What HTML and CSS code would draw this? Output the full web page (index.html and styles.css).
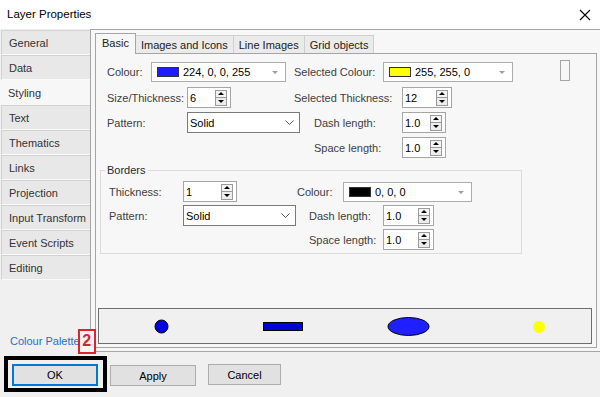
FILE: index.html
```html
<!DOCTYPE html>
<html lang="en">
<head>
    <meta charset="UTF-8">
    <meta name="viewport" content="width=device-width, initial-scale=1.0">
    <title>Layer Properties</title>
    <link rel="stylesheet" href="styles.css">
</head>
<body>
    <div class="titlebar">
        <span class="title">Layer Properties</span>
        <svg class="close" width="12" height="12" viewBox="0 0 12 12"><path d="M1 1L11 11M11 1L1 11" stroke="#000" stroke-width="1.1" fill="none"/></svg>
    </div>

    <div class="main">
        <div class="sidebar">
            <div class="nav-item">General</div>
            <div class="nav-item">Data</div>
            <div class="nav-item active">Styling</div>
            <div class="nav-item">Text</div>
            <div class="nav-item">Thematics</div>
            <div class="nav-item">Links</div>
            <div class="nav-item">Projection</div>
            <div class="nav-item">Input Transform</div>
            <div class="nav-item">Event Scripts</div>
            <div class="nav-item">Editing</div>
            <div class="palette-row">
                <a class="palette-link">Colour Palette</a><span class="badge">2</span>
            </div>
        </div>

        <div class="panel">
            <div class="tabs">
                <div class="tab active">Basic</div>
                <div class="tab">Images and Icons</div>
                <div class="tab">Line Images</div>
                <div class="tab">Grid objects</div>
            </div>
            <div class="page">
                <div class="form">
                    <div class="row first">
                        <span class="label w-colour">Colour:</span>
                        <div class="combo w-combo1"><span class="swatch blue"></span><span class="combo-text">224, 0, 0, 255</span><span class="drop"></span></div>
                        <span class="label w-selcol">Selected Colour:</span>
                        <div class="combo w-combo2"><span class="swatch yellow"></span><span class="combo-text">255, 255, 0</span><span class="drop"></span></div>
                        <span class="blank-box"></span>
                    </div>
                    <div class="row">
                        <span class="label w-left">Size/Thickness:</span>
                        <div class="spin w44"><span class="spin-text">6</span><span class="spin-btn"><i class="up"></i><i class="down"></i></span></div>
                        <span class="label w-selthick">Selected Thickness:</span>
                        <div class="spin w50"><span class="spin-text">12</span><span class="spin-btn"><i class="up"></i><i class="down"></i></span></div>
                    </div>
                    <div class="row">
                        <span class="label w-left">Pattern:</span>
                        <div class="select w113"><span>Solid</span><svg width="9" height="5" viewBox="0 0 9 5"><polyline points="0.5,0.5 4.5,4.5 8.5,0.5" fill="none" stroke="#555" stroke-width="1"/></svg></div>
                        <span class="label w-dash">Dash length:</span>
                        <div class="spin w44"><span class="spin-text">1.0</span><span class="spin-btn"><i class="up"></i><i class="down"></i></span></div>
                    </div>
                    <div class="row">
                        <span class="label w-space">Space length:</span>
                        <div class="spin w44"><span class="spin-text">1.0</span><span class="spin-btn"><i class="up"></i><i class="down"></i></span></div>
                    </div>
                </div>

                <fieldset class="group">
                    <legend>Borders</legend>
                    <div class="grow">
                        <span class="label w74">Thickness:</span>
                        <div class="spin w54"><span class="spin-text">1</span><span class="spin-btn"><i class="up"></i><i class="down"></i></span></div>
                        <span class="label w-bcol">Colour:</span>
                        <div class="combo w129"><span class="swatch black"></span><span class="combo-text">0, 0, 0</span><span class="drop"></span></div>
                    </div>
                    <div class="grow">
                        <span class="label w74">Pattern:</span>
                        <div class="select w113"><span>Solid</span><svg width="9" height="5" viewBox="0 0 9 5"><polyline points="0.5,0.5 4.5,4.5 8.5,0.5" fill="none" stroke="#555" stroke-width="1"/></svg></div>
                        <span class="label w-bdash">Dash length:</span>
                        <div class="spin w51"><span class="spin-text">1.0</span><span class="spin-btn"><i class="up"></i><i class="down"></i></span></div>
                    </div>
                    <div class="grow">
                        <span class="label w-bspace">Space length:</span>
                        <div class="spin w51"><span class="spin-text">1.0</span><span class="spin-btn"><i class="up"></i><i class="down"></i></span></div>
                    </div>
                </fieldset>

                <div class="preview">
                    <svg width="492" height="34" viewBox="0 0 492 34">
                        <circle cx="62.5" cy="17.5" r="6.5" fill="#0000e0" stroke="#000" stroke-width="1"/>
                        <rect x="164.5" y="13.5" width="39" height="8" fill="#0000d8" stroke="#000" stroke-width="1"/>
                        <ellipse cx="309.5" cy="17.5" rx="20.5" ry="9" fill="#1f1fff" stroke="#000" stroke-width="1"/>
                        <circle cx="440" cy="18" r="6" fill="#ffff00"/>
                    </svg>
                </div>
            </div>
        </div>
    </div>

    <div class="footer">
        <div class="highlight">
            <button class="btn ok">OK</button>
        </div>
        <button class="btn apply">Apply</button>
        <button class="btn cancel">Cancel</button>
    </div>
</body>
</html>
```

FILE: styles.css
```css
* {
    box-sizing: border-box;
}
body {
    margin: 0;
    width: 600px;
    height: 397px;
    overflow: hidden;
    background: #f0f0f0;
    font-family: "Liberation Sans", Arial, sans-serif;
    font-size: 11px;
    color: #000;
}
.titlebar {
    height: 29px;
    background: #fff;
    display: flex;
    align-items: center;
    justify-content: space-between;
    padding: 0 9px 1px 7px;
}
.title {
    font-size: 11.5px;
}
.close {
    margin-top: 1px;
}

.main {
    display: flex;
    height: 323px;
}
.sidebar {
    width: 90px;
    flex: none;
    padding-top: 1px;
    display: flex;
    flex-direction: column;
}
.nav-item {
    height: 25px;
    margin-left: 1px;
    padding-left: 7px;
    display: flex;
    align-items: center;
    background: #e8e8e8;
    border: 1px solid #d2d2d2;
    border-right: none;
    border-bottom-color: #fafafa;
    color: #333;
}
.nav-item.active {
    background: #f7f7f7;
    border-color: #f7f7f7;
    margin-left: 0;
    padding-left: 7px;
}
.palette-row {
    margin-top: auto;
    height: 22px;
    padding-left: 10px;
    display: flex;
    align-items: center;
    white-space: nowrap;
}
.palette-link {
    color: #1f6fcf;
    flex: none;
}
.badge {
    position: relative;
    z-index: 2;
    flex: none;
    width: 18px;
    height: 25px;
    margin-left: -2px;
    border: 2px solid #e3202b;
    background: #f4f4f4;
    color: #e3202b;
    font-weight: bold;
    font-size: 16px;
    display: flex;
    align-items: center;
    justify-content: center;
}

.panel {
    flex: 1;
    background: #f7f7f7;
    border: 1px solid #a5a5a5;
    border-right: none;
    padding: 0 3px 0 4px;
    display: flex;
    flex-direction: column;
}
.tabs {
    height: 23px;
    display: flex;
    align-items: flex-end;
}
.tab {
    height: 18px;
    padding: 0 5px;
    display: flex;
    align-items: center;
    background: #ebebeb;
    border: 1px solid #cfcfcf;
    border-bottom: none;
    border-left: none;
    color: #222;
}
.tab.active {
    height: 21px;
    margin-bottom: -1px;
    padding: 0 6px 2px;
    background: #f7f7f7;
    border: 1px solid #a5a5a5;
    border-bottom: none;
    position: relative;
    z-index: 1;
}
.page {
    height: 295px;
    border: 1px solid #a5a5a5;
    background: #f7f7f7;
    padding: 7px 0 0 2px;
    display: flex;
    flex-direction: column;
}
.form {
    padding-left: 9px;
}
.row {
    display: flex;
    align-items: center;
    height: 21px;
    margin-bottom: 4px;
}
.row.first {
    margin-bottom: 5px;
}
.row:last-child {
    margin-bottom: 0;
}
.label {
    color: #404040;
    white-space: nowrap;
    flex: none;
}
.w-colour { width: 44px; }
.w-selcol { width: 89px; margin-left: 8px; }
.w-left { width: 80px; }
.w-selthick { width: 108px; margin-left: 63px; }
.w-dash { width: 88px; margin-left: 14px; }
.w-space { width: 88px; margin-left: 207px; }
.w74 { width: 74px; }
.w-bcol { width: 46px; margin-left: 60px; }
.w-bdash { width: 74px; margin-left: 13px; }
.w-bspace { width: 74px; margin-left: 200px; }

.combo {
    height: 20px;
    background: #fff;
    border: 1px solid #acacac;
    display: flex;
    align-items: center;
    padding-left: 5px;
    flex: none;
}
.w-combo1 { width: 135px; }
.w-combo2 { width: 130px; }
.w129 { width: 129px; }
.swatch {
    width: 22px;
    height: 10px;
    border: 1px solid #333;
    margin-right: 4px;
}
.swatch.blue { background: #1c1cff; }
.swatch.yellow { background: #ffff00; }
.swatch.black { background: #000; }
.combo-text {
    flex: 1;
}
.drop {
    width: 0;
    height: 0;
    border-left: 3px solid transparent;
    border-right: 3px solid transparent;
    border-top: 3px solid #a0a0a0;
    margin: 1px 7px 0 0;
}
.blank-box {
    width: 10px;
    height: 21px;
    margin-left: 47px;
    margin-top: -2px;
    border: 1px solid #a5a5a5;
    background: #f7f7f7;
}

.spin {
    height: 21px;
    background: #fff;
    border: 1px solid #a5a5a5;
    display: flex;
    align-items: center;
    padding: 1px 3px 1px 2px;
    flex: none;
}
.w44 { width: 44px; }
.w50 { width: 50px; }
.w51 { width: 51px; }
.w54 { width: 54px; }
.spin-text {
    flex: 1;
}
.spin-btn {
    width: 12px;
    height: 16px;
    border: 1px solid #9a9a9a;
    display: flex;
    flex-direction: column;
}
.spin-btn i {
    flex: 1;
    display: flex;
    align-items: center;
    justify-content: center;
    background: #ededed;
}
.spin-btn i.up {
    border-bottom: 1px solid #9a9a9a;
    background: #f4f4f4;
}
.spin-btn i::after {
    content: "";
    width: 0;
    height: 0;
    border-left: 3px solid transparent;
    border-right: 3px solid transparent;
}
.spin-btn i.up::after {
    border-bottom: 3px solid #000;
}
.spin-btn i.down::after {
    border-top: 3px solid #000;
}

.select {
    height: 21px;
    background: #fff;
    border: 1px solid #7a7a7a;
    display: flex;
    align-items: center;
    justify-content: space-between;
    padding: 0 5px 0 2px;
    flex: none;
}
.w113 { width: 113px; }

.group {
    margin: 5px 0 0 2px;
    width: 422px;
    padding: 4px 8px 3px;
    border: 1px solid #dcdcdc;
    min-width: 0;
}
.group legend {
    padding: 0 2px;
    margin-left: -4px;
    line-height: 14px;
    color: #1e2a3a;
}
.grow {
    display: flex;
    align-items: center;
    height: 21px;
    margin-bottom: 3px;
}
.grow:last-child {
    margin-bottom: 0;
}

.preview {
    margin-top: auto;
    margin-bottom: 3px;
    width: 494px;
    height: 36px;
    border: 1px solid #6d6d6d;
    background: #f0f0f0;
}
.preview svg {
    display: block;
}

.footer {
    height: 45px;
    display: flex;
    align-items: flex-start;
    padding: 4px 0 0 4px;
}
.highlight {
    border: 4px solid #000;
    padding: 4px 5px 2px 4px;
}
.btn {
    font-family: "Liberation Sans", Arial, sans-serif;
    font-size: 11px;
    color: #000;
    background: #e1e1e1;
    border: 1px solid #adadad;
    height: 21px;
    padding: 0;
}
.btn.ok {
    width: 86px;
    height: 22px;
    border: 2px solid #0078d7;
    display: block;
}
.btn.apply {
    width: 86px;
    margin: 9px 0 0 3px;
}
.btn.cancel {
    width: 73px;
    margin: 8px 0 0 12px;
}
```
